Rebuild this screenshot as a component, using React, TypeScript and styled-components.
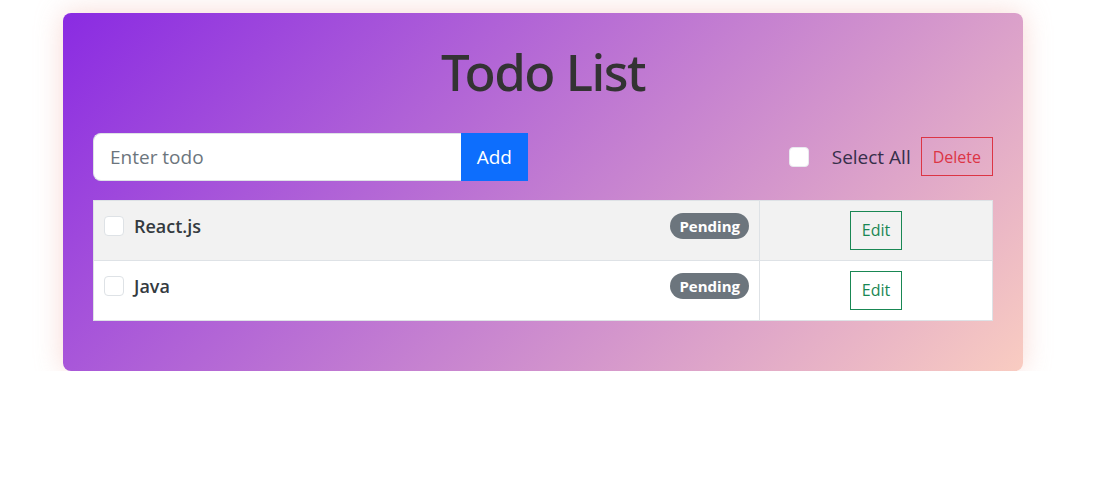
import React, { FC } from 'react';
import styled, { createGlobalStyle } from 'styled-components';

type Todo = { id: number; text: string; status: string };

const todos: Todo[] = [
  { id: 1, text: 'React.js', status: 'Pending' },
  { id: 2, text: 'Java', status: 'Pending' },
];

const App: FC = () => {
  return (
    <>
      <GlobalStyle />
      <Container>
        <Card>
          <Title>Todo List</Title>
          <Toolbar>
            <InputGroup>
              <TodoInput placeholder="Enter todo" />
              <AddButton>Add</AddButton>
            </InputGroup>
            <Actions>
              <SelectBox type="checkbox" />
              <SelectLabel>Select All</SelectLabel>
              <OutlineButton $color="#dc3545">Delete</OutlineButton>
            </Actions>
          </Toolbar>
          <Table>
            <tbody>
              {todos.map((todo, i) => (
                <Row key={todo.id} $striped={i % 2 === 0}>
                  <TextCell>
                    <ItemWrap>
                      <RowBox type="checkbox" />
                      <ItemText>{todo.text}</ItemText>
                      <Badge>{todo.status}</Badge>
                    </ItemWrap>
                  </TextCell>
                  <ActionCell>
                    <OutlineButton $color="#198754">Edit</OutlineButton>
                  </ActionCell>
                </Row>
              ))}
            </tbody>
          </Table>
        </Card>
      </Container>
    </>
  );
};
export default App;

const GlobalStyle = createGlobalStyle`
  body {
    margin: 0;
    background: #fff;
    font-family: "Open Sans", "Noto Sans", sans-serif;
    color: #212529;
  }
  * { box-sizing: border-box; }
`;

const Container = styled.div`
  width: 960px;
  margin: 13px 0 0 63px;
`;

const Card = styled.div`
  border-radius: 8px;
  padding: 27px 30px 50px;
  background: linear-gradient(135deg, #8a2be2 0%, #f9ccc1 100%);
  box-shadow: 0 0 28px rgba(240, 170, 160, 0.45);
`;

const Title = styled.h1`
  margin: 0 0 29px;
  text-align: center;
  font-family: "Noto Sans", "Open Sans", sans-serif;
  font-size: 51px;
  font-weight: 500;
  letter-spacing: -1.5px;
  line-height: 1.25;
  color: #333;
`;

const Toolbar = styled.div`
  display: flex;
  align-items: center;
  justify-content: space-between;
  margin-bottom: 19px;
`;

const InputGroup = styled.div`
  display: flex;
  width: 435px;
  height: 48px;
`;

const TodoInput = styled.input`
  flex: 1;
  min-width: 0;
  border: 1px solid #dee2e6;
  border-right: none;
  border-radius: 8px 0 0 8px;
  padding: 0 16px;
  font-family: inherit;
  font-size: 19px;
  color: #212529;
  outline: none;
  &::placeholder { color: #6c757d; }
`;

const AddButton = styled.button`
  border: none;
  background: #0d6efd;
  color: #fff;
  padding: 0 16px;
  font-family: inherit;
  font-size: 19px;
`;

const Actions = styled.div`
  display: flex;
  align-items: center;
`;

const SelectBox = styled.input`
  appearance: none;
  width: 20px;
  height: 20px;
  margin: 0 23px 0 0;
  background: #fff;
  border: 1px solid #e9e9ef;
  border-radius: 4px;
`;

const SelectLabel = styled.span`
  font-size: 19px;
  color: #362f4a;
  margin-right: 10px;
`;

const OutlineButton = styled.button<{ $color: string }>`
  height: 39px;
  padding: 0 11px;
  background: transparent;
  border: 1px solid ${p => p.$color};
  border-radius: 0;
  color: ${p => p.$color};
  font-family: inherit;
  font-size: 16px;
`;

const Table = styled.table`
  width: 100%;
  border-collapse: collapse;
  background: #fff;
`;

const Row = styled.tr<{ $striped: boolean }>`
  background: ${p => (p.$striped ? '#f2f2f2' : '#fff')};
  td {
    border: 1px solid #dee2e6;
    padding: 10px;
    height: 59px;
    vertical-align: middle;
  }
`;

const TextCell = styled.td`
  width: 666px;
  && {
    vertical-align: top;
    padding-top: 12px;
  }
`;

const ActionCell = styled.td`
  text-align: center;
`;

const ItemWrap = styled.div`
  display: flex;
  align-items: center;
  height: 26px;
`;

const RowBox = styled.input`
  appearance: none;
  width: 20px;
  height: 20px;
  margin: 0 10px 0 0;
  background: #fff;
  border: 1px solid #dee2e6;
  border-radius: 4px;
`;

const ItemText = styled.span`
  flex: 1;
  font-size: 18px;
  font-weight: 600;
  color: #343a40;
`;

const Badge = styled.span`
  display: inline-block;
  padding: 5px 9px;
  border-radius: 13px;
  background: #6c757d;
  color: #fff;
  font-size: 15px;
  font-weight: 700;
  line-height: 16px;
`;
